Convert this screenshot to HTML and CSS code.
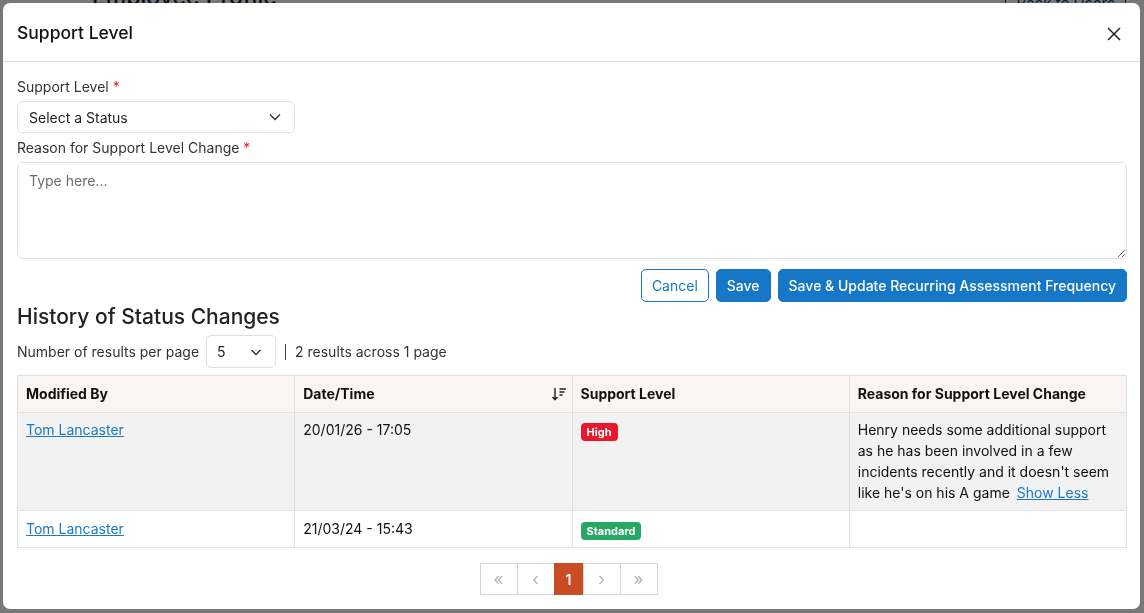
FILE: index.html
```html
<!DOCTYPE html>
<html lang="en">
<head>
    <meta charset="UTF-8">
    <meta name="viewport" content="width=device-width, initial-scale=1.0">
    <title>Employee Profile</title>
    <link rel="stylesheet" href="styles.css">
</head>
<body>
<div class="page">
    <div class="page_head">
        <h1>Employee Profile</h1>
        <a class="back_btn" href="#">Back to Users</a>
    </div>
</div>

<div class="overlay">
    <div class="modal">
        <div class="modal_head">
            <h2>Support Level</h2>
            <button class="close_btn" aria-label="Close">
                <svg width="16" height="16" viewBox="0 0 16 16"><path d="M2 2 L14 14 M14 2 L2 14" stroke="#222" stroke-width="1.5" fill="none"/></svg>
            </button>
        </div>

        <div class="modal_body">
            <div class="field">
                <label>Support Level <span class="req">*</span></label>
                <div class="select status_select">
                    <span>Select a Status</span>
                    <svg width="14" height="14" viewBox="0 0 14 14"><path d="M2 4.5 L7 9.5 L12 4.5" stroke="#333" stroke-width="1.4" fill="none"/></svg>
                </div>
            </div>

            <div class="field field_gap">
                <label>Reason for Support Level Change <span class="req">*</span></label>
                <textarea placeholder="Type here..."></textarea>
            </div>

            <div class="actions">
                <button class="btn btn_outline">Cancel</button>
                <button class="btn btn_primary">Save</button>
                <button class="btn btn_primary">Save &amp; Update Recurring Assessment Frequency</button>
            </div>

            <h3>History of Status Changes</h3>

            <div class="results_bar">
                <span>Number of results per page</span>
                <div class="select per_page">
                    <span>5</span>
                    <svg width="14" height="14" viewBox="0 0 14 14"><path d="M2.5 5 L7 9.5 L11.5 5" stroke="#333" stroke-width="1.4" fill="none"/></svg>
                </div>
                <span class="divider"></span>
                <span>2 results across 1 page</span>
            </div>

            <table class="history">
                <thead>
                <tr>
                    <th>Modified By</th>
                    <th>
                        <div class="th_sort">
                            <span>Date/Time</span>
                            <svg width="16" height="16" viewBox="0 0 16 16">
                                <path d="M4 2 V13.5 M1.5 11 L4 13.8 L6.5 11" stroke="#222" stroke-width="1.4" fill="none"/>
                                <path d="M8.5 3 H15 M8.5 6 H13.5 M8.5 9 H11.5" stroke="#222" stroke-width="1.3" fill="none"/>
                            </svg>
                        </div>
                    </th>
                    <th>Support Level</th>
                    <th>Reason for Support Level Change</th>
                </tr>
                </thead>
                <tbody>
                <tr class="row_alt">
                    <td><a href="#">Tom Lancaster</a></td>
                    <td>20/01/26 - 17:05</td>
                    <td><span class="badge badge_high">High</span></td>
                    <td>Henry needs some additional support as he has been involved in a few incidents recently and it doesn't seem like he's on his A game <a href="#" class="show_less">Show Less</a></td>
                </tr>
                <tr>
                    <td><a href="#">Tom Lancaster</a></td>
                    <td>21/03/24 - 15:43</td>
                    <td><span class="badge badge_standard">Standard</span></td>
                    <td></td>
                </tr>
                </tbody>
            </table>

            <div class="pager">
                <span class="pg">&laquo;</span>
                <span class="pg">&lsaquo;</span>
                <span class="pg active">1</span>
                <span class="pg">&rsaquo;</span>
                <span class="pg">&raquo;</span>
            </div>
        </div>
    </div>
</div>
</body>
</html>
```

FILE: styles.css
```css
:root {
    --txt-color: #212529;
    --label-color: #333333;
    --border-color: #dfe0e4;
    --blue: #1577c5;
    --red: #e8192c;
    --green: #27a764;
    --orange: #c94c24;
}

* {
    margin: 0;
    padding: 0;
    box-sizing: border-box;
}

body {
    font-family: Inter, "Liberation Sans", sans-serif;
    font-size: 14px;
    color: var(--txt-color);
    background: #ffffff;
    overflow: hidden;
}

/* page behind the dialog */
.page_head {
    display: flex;
    justify-content: space-between;
    align-items: flex-start;
    padding: 0 18px 0 92px;
    margin-top: -14px;
}

.page_head h1 {
    font-size: 23px;
    font-weight: 500;
    line-height: 1;
    color: #10233f;
}

.back_btn {
    margin-top: 1px;
    padding: 6px 10px;
    border: 1px solid #0c4a80;
    border-radius: 4px;
    color: #0c4a80;
    text-decoration: none;
    font-size: 15px;
}

.overlay {
    position: fixed;
    inset: 0;
    background: rgba(0, 0, 0, 0.53);
    padding: 3px 4px 4px 3px;
    display: flex;
}

.modal {
    flex: 1;
    background: #ffffff;
    border-radius: 7px;
    display: flex;
    flex-direction: column;
    overflow: hidden;
}

.modal_head {
    height: 59px;
    border-bottom: 1px solid #dedede;
    display: flex;
    align-items: center;
    justify-content: space-between;
    padding: 0 18px 0 14px;
}

.modal_head h2 {
    font-size: 17.5px;
    font-weight: 500;
    color: #111;
}

.close_btn {
    border: none;
    background: none;
    display: flex;
    margin-top: 3px;
}

.modal_body {
    padding: 15px 13px 0 14px;
}

.field label {
    display: block;
    line-height: 20px;
    margin-bottom: 4px;
    color: var(--label-color);
}

.field_gap {
    margin-top: 5px;
}

.req {
    color: var(--red);
}

.select {
    display: flex;
    align-items: center;
    justify-content: space-between;
    border: 1px solid var(--border-color);
    border-radius: 5px;
    color: #222;
}

.status_select {
    width: 278px;
    height: 32px;
    padding: 0 12px 0 11px;
}

textarea {
    display: block;
    width: 100%;
    height: 97px;
    border: 1px solid var(--border-color);
    border-radius: 5px;
    padding: 9px 11px;
    font-family: inherit;
    font-size: 14px;
    resize: vertical;
}

textarea::placeholder {
    color: #6b6b6b;
}

.actions {
    display: flex;
    justify-content: flex-end;
    gap: 7px;
    margin-top: 10px;
}

.btn {
    height: 33px;
    padding: 0 10px;
    border-radius: 5px;
    font-family: inherit;
    font-size: 14px;
    cursor: pointer;
}

.btn_outline {
    background: #ffffff;
    border: 1px solid var(--blue);
    color: var(--blue);
}

.btn_primary {
    background: var(--blue);
    border: 1px solid var(--blue);
    color: #ffffff;
    font-weight: 500;
    padding: 0 10px;
}

.modal_body h3 {
    font-size: 21px;
    font-weight: 500;
    line-height: 26px;
    margin-top: 2px;
    color: #222;
}

.results_bar {
    display: flex;
    align-items: center;
    margin-top: 5px;
    color: var(--label-color);
}

.per_page {
    width: 70px;
    height: 33px;
    margin-left: 7px;
    padding: 0 12px 0 10px;
}

.divider {
    width: 1px;
    height: 16px;
    background: #444;
    margin: 0 9px 0 9px;
}

.history {
    width: 100%;
    margin-top: 7px;
    border-collapse: collapse;
    table-layout: fixed;
}

.history th,
.history td {
    border: 1px solid var(--border-color);
    padding: 8px 8px;
    text-align: left;
    vertical-align: top;
}

.history th {
    background: #f9f5f3;
    font-weight: 700;
    line-height: 20px;
    color: #111;
}

.history td {
    line-height: 21px;
    padding: 7px 8px 8px 8px;
    color: #111;
}

.row_alt td {
    background: #f2f2f2;
    padding-top: 6px;
    padding-bottom: 7px;
}

.th_sort {
    display: flex;
    justify-content: space-between;
    align-items: center;
}

.th_sort svg {
    margin-right: -3px;
}

.history a {
    color: #1a7ac4;
}

.show_less {
    margin-left: 3px;
}

.badge {
    display: inline-block;
    font-size: 11px;
    font-weight: 700;
    line-height: 14px;
    color: #ffffff;
    padding: 2px 6px;
    border-radius: 4px;
    position: relative;
    top: 1px;
}

.badge_high {
    background: var(--red);
}

.badge_standard {
    background: var(--green);
}

.pager {
    display: flex;
    justify-content: center;
    margin-top: 15px;
    padding-right: 6px;
}

.pg {
    width: 38px;
    height: 32px;
    display: flex;
    align-items: center;
    justify-content: center;
    border: 1px solid #d6d6d6;
    margin-left: -1px;
    color: #b0b0b0;
    font-size: 17px;
}

.pg.active {
    width: 30px;
    background: var(--orange);
    border-color: var(--orange);
    color: #ffffff;
    font-size: 14px;
    font-weight: 600;
}
```
